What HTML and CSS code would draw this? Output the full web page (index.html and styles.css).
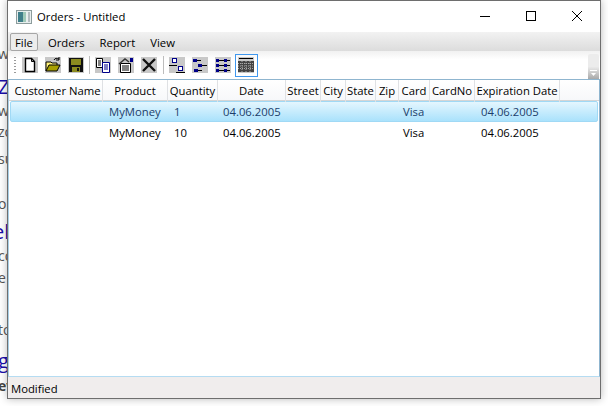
FILE: index.html
```html
<!DOCTYPE html>
<html lang="en">
<head>
    <meta charset="UTF-8">
    <title>Orders - Untitled</title>
    <link rel="stylesheet" href="styles.css">
</head>
<body>
    <!-- page behind the window, only its left edge shows -->
    <div class="behind">
        <span class="scrap" style="top: 44px">w</span>
        <span class="scrap link big" style="top: 73px">Z</span>
        <span class="scrap" style="top: 101px">w</span>
        <span class="scrap" style="top: 122px">zo</span>
        <span class="scrap" style="top: 149px">su</span>
        <span class="scrap" style="top: 194px">op</span>
        <span class="scrap link big tight" style="top: 218px">el</span>
        <span class="scrap" style="top: 246px">co</span>
        <span class="scrap" style="top: 268px">e</span>
        <span class="scrap" style="top: 320px">to</span>
        <span class="scrap link big" style="top: 347px">g</span>
        <span class="scrap bold" style="top: 376px">ev</span>
    </div>

    <div class="window">
        <div class="titlebar">
            <svg class="app-icon" width="16" height="16" viewBox="0 0 16 16">
                <rect x="0.5" y="1.5" width="15" height="13" fill="#e8eeee" stroke="#8c9c9c"/>
                <rect x="2" y="3" width="5" height="10" fill="#3f7f8a"/>
                <rect x="7" y="3" width="3" height="10" fill="#9fc9b8"/>
                <rect x="12" y="3" width="2" height="10" fill="#b4bcc0"/>
            </svg>
            <span class="title">Orders - Untitled</span>
            <div class="caption-buttons">
                <svg class="caption-btn" width="46" height="31" viewBox="0 0 46 31"><path d="M18 15.5h10" stroke="#000" fill="none"/></svg>
                <svg class="caption-btn" width="46" height="31" viewBox="0 0 46 31"><rect x="18.5" y="10.5" width="9" height="9" stroke="#000" fill="none"/></svg>
                <svg class="caption-btn" width="46" height="31" viewBox="0 0 46 31"><path d="M18 10l10 10M28 10l-10 10" stroke="#000" fill="none"/></svg>
            </div>
        </div>

        <div class="menubar">
            <span class="menu-item active">File</span>
            <span class="menu-item">Orders</span>
            <span class="menu-item">Report</span>
            <span class="menu-item">View</span>
        </div>

        <div class="toolbar">
            <div class="grip"></div>
            <span class="tool">
                <svg width="16" height="16" viewBox="0 0 16 16"><path d="M3.5 1.5h6l3 3v10h-9z" fill="#fff" stroke="#000" stroke-width="1.4"/><path d="M9.5 1.5v3h3" fill="none" stroke="#000"/></svg>
            </span>
            <span class="tool">
                <svg width="16" height="16" viewBox="0 0 16 16"><path d="M1 14V5h5l1 1h5v2" fill="#fff27a" stroke="#000"/><path d="M1 14l3-6h11l-3 6z" fill="#a8a000" stroke="#000"/><path d="M9 3c1-2 3-2 5-1M14 0v3h-3" fill="none" stroke="#000"/></svg>
            </span>
            <span class="tool">
                <svg width="16" height="16" viewBox="0 0 16 16"><rect x="1" y="1" width="14" height="14" fill="#111"/><rect x="3" y="2" width="10" height="6" fill="#8a8a20"/><rect x="4" y="10" width="8" height="5" fill="#8a8a20"/><rect x="9" y="11" width="2" height="3" fill="#111"/></svg>
            </span>
            <div class="tool-sep"></div>
            <span class="tool">
                <svg width="16" height="16" viewBox="0 0 16 16"><path d="M1.5 1.5h6v9h-6z" fill="#fff" stroke="#000"/><path d="M3 4h3M3 6h3M3 8h3" stroke="#000"/><path d="M7.5 5.5h7v10h-7z" fill="#fff" stroke="#00008a"/><path d="M9 8h4M9 10h4M9 12h4" stroke="#00008a"/></svg>
            </span>
            <span class="tool">
                <svg width="16" height="16" viewBox="0 0 16 16"><path d="M2.5 6.5h10v9h-10z" fill="#fff" stroke="#000"/><path d="M4 9h7M4 11h7M4 13h7" stroke="#000"/><path d="M1 7l6-5 4 3" fill="none" stroke="#333" stroke-width="1.5"/><rect x="12" y="1" width="3" height="4" fill="#00008a"/></svg>
            </span>
            <span class="tool">
                <svg width="16" height="16" viewBox="0 0 16 16"><path d="M2 2l12 12M14 2L2 14" stroke="#111" stroke-width="2.4" fill="none"/></svg>
            </span>
            <div class="tool-sep wide"></div>
            <span class="tool">
                <svg width="16" height="16" viewBox="0 0 16 16"><rect x="3.5" y="1.5" width="4" height="4" fill="#fff" stroke="#00008a"/><path d="M0 8.5h8" stroke="#000"/><rect x="9.5" y="9.5" width="4" height="4" fill="#fff" stroke="#00008a"/><path d="M7 15.5h9" stroke="#000"/></svg>
            </span>
            <span class="tool">
                <svg width="16" height="16" viewBox="0 0 16 16"><path d="M5 3.5h4M10 8.5h5M6 13.5h4" stroke="#000" fill="none"/><rect x="1" y="2" width="4" height="3" fill="#00008a"/><rect x="6" y="7" width="4" height="3" fill="#00008a"/><rect x="2" y="12" width="4" height="3" fill="#00008a"/></svg>
            </span>
            <span class="tool">
                <svg width="16" height="16" viewBox="0 0 16 16"><path d="M1 3.5h14M1 8.5h14M1 13.5h14" stroke="#000"/><rect x="1" y="2" width="3" height="3" fill="#00008a"/><rect x="9" y="2" width="3" height="3" fill="#00008a"/><rect x="1" y="7" width="3" height="3" fill="#00008a"/><rect x="9" y="7" width="3" height="3" fill="#00008a"/><rect x="1" y="12" width="3" height="3" fill="#00008a"/><rect x="9" y="12" width="3" height="3" fill="#00008a"/></svg>
            </span>
            <span class="tool selected">
                <svg width="16" height="16" viewBox="0 0 16 16"><path d="M1 1.5h14" stroke="#000"/><path d="M0 4h16V15H0z" fill="#444"/><path d="M0 6.5h16M0 9h16M0 11.5h16M4 4v11M8 4v11M12 4v11" stroke="#aaa" stroke-dasharray="1 1"/></svg>
            </span>
            <div class="overflow">
                <svg width="7" height="6" viewBox="0 0 7 6"><path d="M0 0.5h7" stroke="#fff"/><path d="M1 3h5L3.5 6z" fill="#fff"/></svg>
            </div>
        </div>

        <div class="grid">
            <div class="row header">
                <span class="head">Customer Name</span>
                <span class="head">Product</span>
                <span class="head">Quantity</span>
                <span class="head">Date</span>
                <span class="head">Street</span>
                <span class="head">City</span>
                <span class="head">State</span>
                <span class="head">Zip</span>
                <span class="head">Card</span>
                <span class="head">CardNo</span>
                <span class="head">Expiration Date</span>
            </div>
            <div class="row item selected-row">
                <span></span><span>MyMoney</span><span>1</span><span>04.06.2005</span>
                <span></span><span></span><span></span><span></span>
                <span>Visa</span><span></span><span>04.06.2005</span>
            </div>
            <div class="row item">
                <span></span><span>MyMoney</span><span>10</span><span>04.06.2005</span>
                <span></span><span></span><span></span><span></span>
                <span>Visa</span><span></span><span>04.06.2005</span>
            </div>
        </div>

        <div class="statusbar">Modified</div>
    </div>
</body>
</html>
```

FILE: styles.css
```css
* {
    box-sizing: border-box;
}
body {
    margin: 0;
    width: 608px;
    height: 406px;
    overflow: hidden;
    position: relative;
    background: #fff;
    font-family: "Open Sans", "Noto Sans", sans-serif;
    font-size: 11.3px;
    color: #000;
}

/* page behind */
.behind {
    position: absolute;
    inset: 0;
    overflow: hidden;
}
.scrap {
    position: absolute;
    left: -2px;
    font-size: 14px;
    color: #555;
}
.scrap.link {
    color: #1a0dab;
}
.scrap.big {
    font-size: 20px;
}
.scrap.tight {
    left: -7px;
}
.scrap.bold {
    font-weight: bold;
    color: #444;
}

/* window */
.window {
    position: absolute;
    left: 7px;
    top: 0;
    width: 594px;
    height: 399px;
    display: flex;
    flex-direction: column;
    background: #fff;
    border: 1px solid #6e6e6e;
    box-shadow: 0 0 8px rgba(0, 0, 0, 0.28);
}
.titlebar {
    height: 31px;
    flex: none;
    display: flex;
    align-items: center;
    padding-left: 8px;
    background: #fff;
}
.app-icon {
    margin-right: 5px;
}
.caption-buttons {
    margin-left: auto;
    display: flex;
}

/* menu */
.menubar {
    height: 19px;
    flex: none;
    display: flex;
    align-items: center;
    padding-left: 2px;
    gap: 5px;
    background: linear-gradient(#f2f2f2, #dcdcdc);
}
.menu-item {
    height: 18px;
    line-height: 18px;
    padding: 0 4px;
    border: 1px solid transparent;
}
.menu-item.active {
    border-color: #a6a6a6;
    border-radius: 2px;
    background: #ececec;
}

/* toolbar */
.toolbar {
    height: 28px;
    flex: none;
    display: flex;
    align-items: center;
    padding: 0 1px 0 6px;
    background: linear-gradient(#f1f1f1, #fff 30%);
}
.grip {
    width: 2px;
    height: 16px;
    margin-right: 3px;
    background: repeating-linear-gradient(#9a9a9a 0 1px, transparent 1px 3px);
}
.tool {
    width: 23px;
    height: 23px;
    display: flex;
    align-items: center;
    padding-left: 3px;
}
.tool svg {
    background: #c8c8c8;
}
.tool.selected {
    border: 1px solid #3f97ee;
    padding-left: 2px;
}
.tool-sep {
    width: 1px;
    height: 18px;
    margin: 0 2px 0 1px;
    background: #bdbdbd;
}
.tool-sep.wide {
    margin-left: 2px;
}
.overflow {
    margin-left: auto;
    align-self: flex-end;
    width: 11px;
    height: 25px;
    display: flex;
    align-items: flex-end;
    justify-content: center;
    padding-bottom: 3px;
    border-radius: 2px 2px 0 0;
    background: linear-gradient(#ececec 50%, #a9a9a9);
}

/* orders grid */
.grid {
    flex: 1;
    padding-left: 1px;
    border-top: 1px solid #8fb5cf;
    border-bottom: 1px solid #b5dcf2;
    border-left: 1px solid #a8cfe6;
    border-right: 1px solid #8fb5cf;
    background: #fff;
    overflow: hidden;
}
.row {
    display: grid;
    grid-template-columns: 90px 65px 50px 68px 35px 25px 30px 23px 31px 45px 85px;
    padding-left: 3px;
}
.header {
    height: 21px;
    margin-left: -1px;
    padding-left: 4px;
    background: linear-gradient(#fff, #f7f8fa);
    border-bottom: 1px solid #d5d5d5;
}
.head {
    line-height: 22px;
    text-align: center;
    white-space: nowrap;
    border-right: 1px solid #dfe1e4;
}
.item {
    height: 21px;
    line-height: 22px;
    margin-right: 1px;
}
.item span {
    padding-left: 6px;
    white-space: nowrap;
}
.item span:nth-child(4) {
    padding-left: 5px;
}
.item span:nth-child(9) {
    padding-left: 4px;
}
.selected-row {
    line-height: 20px;
    color: #1c3e6b;
    border: 1px solid #a0d9f5;
    border-radius: 2px;
    padding-left: 2px;
    background: linear-gradient(#e4f6fe, #aae2fc);
}
.statusbar {
    height: 21px;
    flex: none;
    line-height: 24px;
    padding-left: 3px;
    background: #f0eded;
}
```
